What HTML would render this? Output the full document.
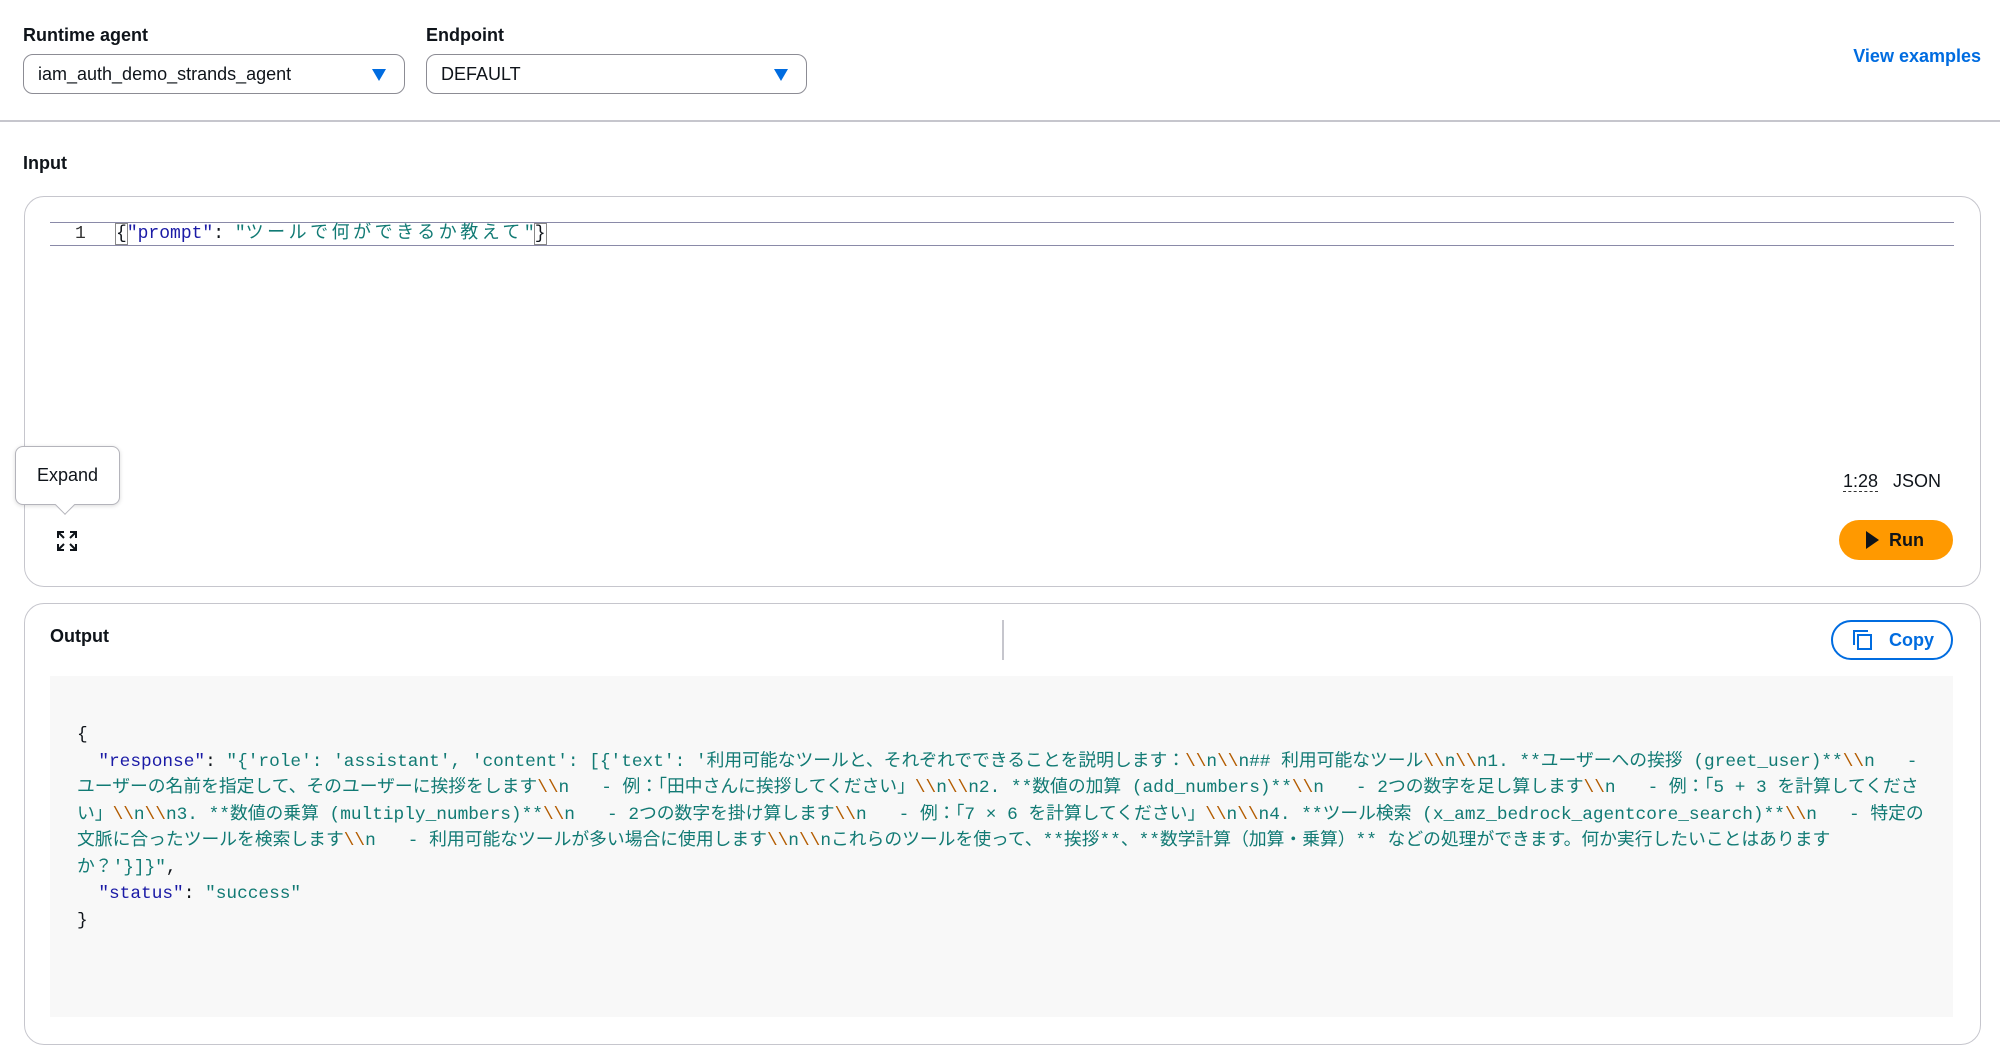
<!DOCTYPE html>
<html><head><meta charset="utf-8"><style>
*{box-sizing:border-box;margin:0;padding:0}
body{width:2000px;height:1047px;background:#fff;font-family:"Liberation Sans","Noto Sans CJK JP",sans-serif;color:#0f141a;position:relative;overflow:hidden}
.abs{position:absolute}
.lbl{font-weight:bold;font-size:18px}
.sel{border:1.5px solid #8c8c94;border-radius:10px;height:40px;font-size:18px;padding:9px 14px}
.tri{position:absolute;right:18px;top:14px;width:0;height:0;border-left:7px solid transparent;border-right:7px solid transparent;border-top:12px solid #006ce0}
.box{border:1.5px solid #c6c6cd;border-radius:20px;background:#fff}
.code{font-family:"Liberation Mono","Noto Sans CJK JP",monospace;white-space:pre}
.k{color:#1a1aa6}.s{color:#117a74}.e{color:#b35c00}
</style></head><body>
<div class="abs lbl" style="left:23px;top:25px">Runtime agent</div>
<div class="abs lbl" style="left:426px;top:25px">Endpoint</div>
<div class="abs sel" style="left:23px;top:54px;width:382px">iam_auth_demo_strands_agent<div class="tri"></div></div>
<div class="abs sel" style="left:426px;top:54px;width:381px">DEFAULT<div class="tri"></div></div>
<div class="abs" style="right:19px;top:46px;font-size:18px;font-weight:bold;color:#006ce0">View examples</div>
<div class="abs" style="left:0;top:120px;width:2000px;height:1.5px;background:#c6c6cd"></div>
<div class="abs lbl" style="left:23px;top:153px">Input</div>

<div class="abs box" style="left:24px;top:196px;width:1957px;height:391px"></div>
<div class="abs" style="left:50px;top:222px;width:1904px;height:24px;border-top:1px solid #8a8aa8;border-bottom:1px solid #8a8aa8"></div>
<div class="abs code" style="left:75px;top:223px;font-size:18px;line-height:22px;color:#333">1</div>
<div class="abs code" style="left:116px;top:223px;font-size:18px;line-height:22px"><span style="outline:1px solid #888">{</span><span class="k">"prompt"</span>: <span class="s">"<span style="letter-spacing:3.5px">ツールで何ができるか教えて</span>"</span><span style="outline:1px solid #888">}</span></div>

<div class="abs" style="left:15px;top:446px;width:105px;height:59px;border:1.5px solid #b4b4bb;border-radius:8px;background:#fff;box-shadow:0 1px 4px rgba(0,0,0,.15);font-size:18px;text-align:center;line-height:56px">Expand</div>
<div class="abs" style="left:58px;top:498px;width:14px;height:14px;background:#fff;border-right:1.5px solid #b4b4bb;border-bottom:1.5px solid #b4b4bb;transform:rotate(45deg)"></div>
<svg class="abs" style="left:57px;top:531px" width="20" height="20" viewBox="0 0 20 20" fill="none" stroke="#0f141a" stroke-width="2"><path d="M1 7V1h6M13 1h6v6M19 13v6h-6M7 19H1v-6M1 1l6 6M19 1l-6 6M19 19l-6-6M1 19l6-6"/></svg>

<div class="abs" style="left:1843px;top:471px;font-size:18px"><span style="border-bottom:1.5px dashed #333">1:28</span>&nbsp;&nbsp; JSON</div>
<div class="abs" style="left:1839px;top:520px;width:114px;height:40px;background:#ff9900;border-radius:20px;font-size:18px;font-weight:bold;line-height:40px;padding-left:50px">Run</div>
<div class="abs" style="left:1866px;top:531px;width:0;height:0;border-top:9px solid transparent;border-bottom:9px solid transparent;border-left:13px solid #0f141a"></div>

<div class="abs box" style="left:24px;top:603px;width:1957px;height:442px"></div>
<div class="abs lbl" style="left:50px;top:626px">Output</div>
<div class="abs" style="left:1002px;top:620px;width:1.5px;height:40px;background:#c6c6cd"></div>
<div class="abs" style="left:1831px;top:620px;width:122px;height:40px;border:2px solid #006ce0;border-radius:20px;color:#006ce0;font-size:18px;font-weight:bold;line-height:36px;padding-left:56px">Copy</div>
<svg class="abs" style="left:1852px;top:629px" width="22" height="22" viewBox="0 0 22 22" fill="none" stroke="#006ce0" stroke-width="2"><path d="M2 16V2h14"/><rect x="6" y="6" width="13" height="14"/></svg>

<div class="abs" style="left:50px;top:676px;width:1903px;height:341px;background:#f8f8f8"></div>
<div class="abs code" style="left:77px;top:722px;font-size:17.8px;line-height:26.5px;color:#0f141a">{
  <span class="k">"response"</span>: <span class="s">"{'role': 'assistant', 'content': [{'text': '利用可能なツールと、それぞれでできることを説明します：<span class="e">\\</span>n<span class="e">\\</span>n## 利用可能なツール<span class="e">\\</span>n<span class="e">\\</span>n1. **ユーザーへの挨拶 (greet_user)**<span class="e">\\</span>n   -
ユーザーの名前を指定して、そのユーザーに挨拶をします<span class="e">\\</span>n   - 例：「田中さんに挨拶してください」<span class="e">\\</span>n<span class="e">\\</span>n2. **数値の加算 (add_numbers)**<span class="e">\\</span>n   - 2つの数字を足し算します<span class="e">\\</span>n   - 例：「5 + 3 を計算してくださ
い」<span class="e">\\</span>n<span class="e">\\</span>n3. **数値の乗算 (multiply_numbers)**<span class="e">\\</span>n   - 2つの数字を掛け算します<span class="e">\\</span>n   - 例：「7 × 6 を計算してください」<span class="e">\\</span>n<span class="e">\\</span>n4. **ツール検索 (x_amz_bedrock_agentcore_search)**<span class="e">\\</span>n   - 特定の
文脈に合ったツールを検索します<span class="e">\\</span>n   - 利用可能なツールが多い場合に使用します<span class="e">\\</span>n<span class="e">\\</span>nこれらのツールを使って、**挨拶**、**数学計算（加算・乗算）** などの処理ができます。何か実行したいことはあります
か？'}]}"</span>,
  <span class="k">"status"</span>: <span class="s">"success"</span>
}</div>
</body></html>
